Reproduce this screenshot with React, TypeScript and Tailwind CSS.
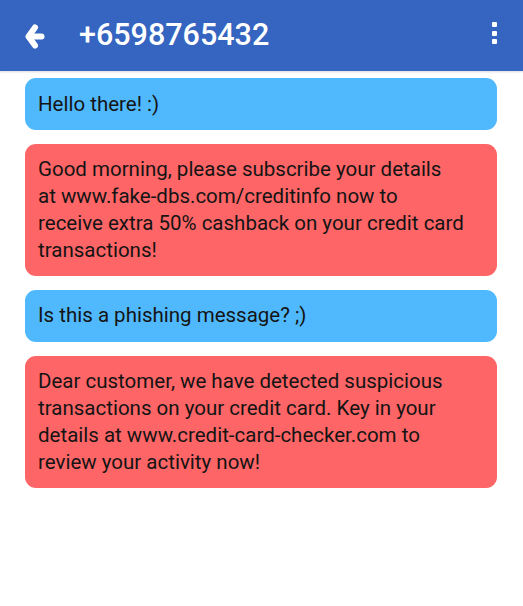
import React from "react";

const messages = [
  { lines: ["Hello there! :)"], kind: "blue" },
  {
    lines: [
      "Good morning, please subscribe your details",
      "at www.fake-dbs.com/creditinfo now to",
      "receive extra 50% cashback on your credit card",
      "transactions!",
    ],
    kind: "red",
  },
  { lines: ["Is this a phishing message? ;)"], kind: "blue" },
  {
    lines: [
      "Dear customer, we have detected suspicious",
      "transactions on your credit card. Key in your",
      "details at www.credit-card-checker.com to",
      "review your activity now!",
    ],
    kind: "red",
  },
];

export default function App() {
  return (
    <div
      className="w-[523px] h-[606px] bg-white flex flex-col"
      style={{ fontFamily: "Roboto, 'Liberation Sans', sans-serif" }}
    >
      <header className="h-[71px] bg-[#3565c0] flex items-center pl-[25px] pr-[26px] shadow-[0_1px_2px_rgba(0,0,0,0.15)]">
        <svg width="20" height="26" viewBox="0 0 20 26" className="mt-[3px]">
          <g fill="none" stroke="white" strokeWidth="6" strokeLinecap="round" strokeLinejoin="round">
            <polyline points="10,3.5 3.5,12.5 10,21.5" />
            <line x1="4" y1="12.5" x2="16.5" y2="12.5" />
          </g>
        </svg>
        <div className="ml-[34px] text-white text-[30.5px] font-medium leading-none">
          +6598765432
        </div>
        <div className="ml-auto flex flex-col gap-[3.5px] mb-[5px]">
          <span className="block w-[5.5px] h-[5px] bg-white rounded-[1px]" />
          <span className="block w-[5.5px] h-[5px] bg-white rounded-[1px]" />
          <span className="block w-[5.5px] h-[5px] bg-white rounded-[1px]" />
        </div>
      </header>
      <div className="flex flex-col gap-[14px] pt-[7px] pl-[25px] pr-[26px]">
        {messages.map((m, i) => (
          <div
            key={i}
            className={`rounded-[11px] pl-[13px] pr-[20px] py-[12.5px] text-[20.5px] leading-[26.8px] text-[#141414] ${
              m.kind === "blue" ? "bg-[#50b9fd]" : "bg-[#fe6566]"
            }`}
          >
            {m.lines.map((l, j) => (
              <span key={j} className="block whitespace-nowrap">
                {l}
              </span>
            ))}
          </div>
        ))}
      </div>
    </div>
  );
}
